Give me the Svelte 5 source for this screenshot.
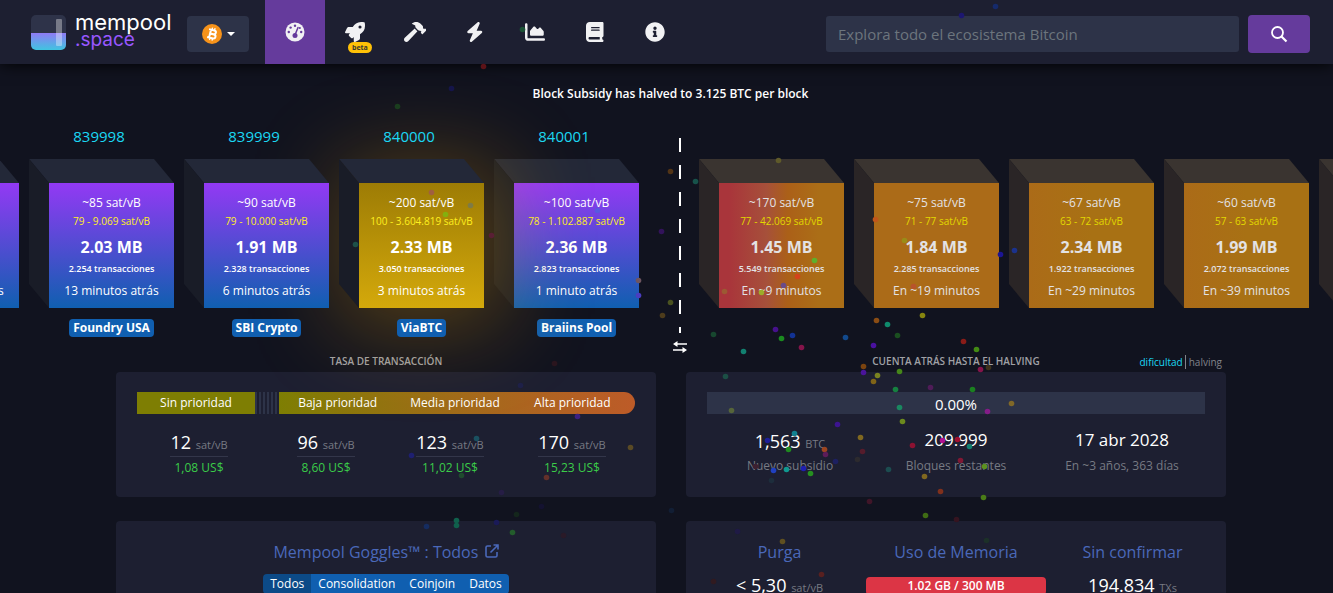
<script>
  const navItems = [
    { id: "dashboard", label: "Panel" },
    { id: "rocket", label: "Acelerador", beta: true },
    { id: "hammer", label: "Minería" },
    { id: "bolt", label: "Lightning" },
    { id: "chart", label: "Gráficos" },
    { id: "book", label: "Documentos" },
    { id: "info", label: "Acerca de" },
  ];

  const icons = {
    rocket: {
      box: "0 0 512 512",
      d: "M505.1 19.1c-1.2-5.5-6.7-11-12.2-12.2C460.7 0 435.5 0 410.4 0 307.2 0 245.3 55.2 199.1 128H94.8c-16.3 0-35.5 11.9-42.9 26.5L2.5 253.3A28.4 28.4 0 0 0 0 264a24 24 0 0 0 24 24h103.8l-22.5 22.5c-11.3 11.3-13 32.2 0 45.2l50.9 50.9c11.2 11.2 32.2 13.2 45.3 0l22.5-22.4V488a24 24 0 0 0 24 24 28.6 28.6 0 0 0 10.7-2.5l98.7-49.4c14.7-7.3 26.6-26.5 26.6-42.9V312.8c72.6-46.3 128-108.4 128-211.1 0-25.2 0-50.4-6.9-82.6ZM384 168a40 40 0 1 1 40-40 40 40 0 0 1-40 40Z",
    },
    hammer: {
      box: "0 0 576 512",
      d: "M571.31 193.94l-22.63-22.63c-6.25-6.25-16.38-6.25-22.63 0l-11.31 11.31-28.9-28.9c5.63-21.31.36-44.9-16.35-61.61l-45.25-45.25c-62.48-62.48-163.79-62.48-226.28 0l90.51 45.25v18.75c0 16.97 6.74 33.25 18.75 45.25l49.14 49.14c16.71 16.71 40.3 21.98 61.61 16.35l28.9 28.9-11.31 11.31c-6.25 6.25-6.25 16.38 0 22.63l22.63 22.63c6.25 6.25 16.38 6.25 22.63 0l90.51-90.51c6.23-6.24 6.23-16.37-.02-22.62zm-286.72-15.2c-3.7-3.7-6.84-7.79-9.85-11.95L19.64 404.96c-25.57 23.88-26.26 64.19-1.53 88.93s65.05 24.05 88.92-1.53l238.13-255.07c-3.96-2.91-7.9-5.87-11.44-9.41l-49.13-49.14z",
    },
    bolt: {
      box: "0 0 448 512",
      d: "M349.4 44.6c5.9-13.7 1.5-29.7-10.6-38.5s-28.6-8-39.9 1.8l-256 224c-10 8.8-13.6 22.9-8.9 35.3S50.7 288 64 288H175.5L98.6 467.4c-5.9 13.7-1.5 29.7 10.6 38.5s28.6 8 39.9-1.8l256-224c10-8.8 13.6-22.9 8.9-35.3s-16.6-20.7-30-20.7H272.5L349.4 44.6z",
    },
    chart: {
      box: "0 0 512 512",
      d: "M64 64c0-17.7-14.3-32-32-32S0 46.3 0 64V400c0 44.2 35.8 80 80 80H480c17.7 0 32-14.3 32-32s-14.3-32-32-32H80c-8.8 0-16-7.2-16-16V64zm96 288H448c17.7 0 32-14.3 32-32V251.8c0-7.6-2.7-15-7.7-20.8l-65.8-76.8c-12.1-14.2-33.7-15-46.9-1.8l-21 21c-10 10-26.4 9.2-35.4-1.6l-39.2-47c-12.6-15.1-35.7-15.4-48.7-.6L135.9 215c-5.1 5.8-7.9 13.3-7.9 21.1v84c0 17.7 14.3 32 32 32z",
    },
    book: {
      box: "0 0 448 512",
      d: "M96 0C43 0 0 43 0 96V416c0 53 43 96 96 96H384h32c17.7 0 32-14.3 32-32s-14.3-32-32-32V384c17.7 0 32-14.3 32-32V32c0-17.7-14.3-32-32-32H384 96zm0 384H352v64H96c-17.7 0-32-14.3-32-32s14.3-32 32-32zm32-240c0-8.8 7.2-16 16-16H336c8.8 0 16 7.2 16 16s-7.2 16-16 16H144c-8.8 0-16-7.2-16-16zm16 48H336c8.8 0 16 7.2 16 16s-7.2 16-16 16H144c-8.8 0-16-7.2-16-16s7.2-16 16-16z",
    },
    info: {
      box: "0 0 512 512",
      d: "M256 8C119.043 8 8 119.083 8 256c0 136.997 111.043 248 248 248s248-111.003 248-248C504 119.083 392.957 8 256 8zm0 110c23.196 0 42 18.804 42 42s-18.804 42-42 42-42-18.804-42-42 18.804-42 42-42zm56 254c0 6.627-5.373 12-12 12h-88c-6.627 0-12-5.373-12-12v-24c0-6.627 5.373-12 12-12h12v-64h-12c-6.627 0-12-5.373-12-12v-24c0-6.627 5.373-12 12-12h64c6.627 0 12 5.373 12 12v100h12c6.627 0 12 5.373 12 12v24z",
    },
  };

  // newest first, laid out right to left
  const mined = [
    { height: "840001", fee: "~100 sat/vB", range: "78 - 1.102.887 sat/vB", size: "2.36 MB", txs: "2.823", time: "1 minuto atrás", pool: "Braiins Pool" },
    { height: "840000", fee: "~200 sat/vB", range: "100 - 3.604.819 sat/vB", size: "2.33 MB", txs: "3.050", time: "3 minutos atrás", pool: "ViaBTC", golden: true },
    { height: "839999", fee: "~90 sat/vB", range: "79 - 10.000 sat/vB", size: "1.91 MB", txs: "2.328", time: "6 minutos atrás", pool: "SBI Crypto" },
    { height: "839998", fee: "~85 sat/vB", range: "79 - 9.069 sat/vB", size: "2.03 MB", txs: "2.254", time: "13 minutos atrás", pool: "Foundry USA" },
    { height: "839997", fee: "~80 sat/vB", range: "75 - 900 sat/vB", size: "1.98 MB", txs: "2.410", time: "15 minutos atrás", pool: "AntPool" },
  ];

  const pending = [
    { fee: "~170 sat/vB", range: "77 - 42.069 sat/vB", size: "1.45 MB", txs: "5.549", time: "En ~9 minutos", kind: "hot" },
    { fee: "~75 sat/vB", range: "71 - 77 sat/vB", size: "1.84 MB", txs: "2.285", time: "En ~19 minutos", kind: "warm" },
    { fee: "~67 sat/vB", range: "63 - 72 sat/vB", size: "2.34 MB", txs: "1.922", time: "En ~29 minutos", kind: "mild" },
    { fee: "~60 sat/vB", range: "57 - 63 sat/vB", size: "1.99 MB", txs: "2.072", time: "En ~39 minutos", kind: "mild" },
    { fee: "~55 sat/vB", range: "52 - 57 sat/vB", size: "1.90 MB", txs: "2.150", time: "En ~49 minutos", kind: "mild" },
  ];

  const fees = [
    { rate: "12", usd: "1,08 US$" },
    { rate: "96", usd: "8,60 US$" },
    { rate: "123", usd: "11,02 US$" },
    { rate: "170", usd: "15,23 US$" },
  ];

  const filters = ["Todos", "Consolidation", "Coinjoin", "Datos"];
  let filter = $state("Todos");
  let search = $state("");

  // confetti: x, y, colour
  const confetti = [
    [522, 29, "#1c5236"], [483, 66, "#5c1318"], [961, 15, "#1d1770"], [995, 6, "#152a6b"],
    [397, 106, "#1a3d1e"], [451, 88, "#15154a"], [431, 192, "#a0603f"], [470, 205, "#7f7b45"],
    [445, 214, "#84b00e"], [355, 244, "#1d5048"], [491, 235, "#591f34"], [597, 210, "#5858e0"],
    [638, 280, "#6e5560"], [638, 295, "#4a3dc0"], [670, 171, "#523416"], [695, 181, "#17524a"],
    [661, 231, "#32135a"], [670, 302, "#4a5220"], [662, 315, "#4d3c1c"], [778, 160, "#5f5a2a"],
    [814, 260, "#5fb02b"], [797, 276, "#d4431c"], [783, 285, "#6a4b88"], [761, 292, "#9cac2a"],
    [724, 291, "#9c5a33"], [713, 334, "#17472f"], [743, 351, "#128070"], [775, 329, "#46118c"],
    [781, 338, "#1b8a20"], [792, 335, "#123294"], [801, 347, "#84144a"], [845, 337, "#12498c"],
    [873, 345, "#4a11a0"], [876, 320, "#8a4c14"], [887, 324, "#0f8a6c"], [897, 335, "#1b4f20"],
    [922, 315, "#86850f"], [963, 341, "#8a1c18"], [976, 349, "#438a14"], [875, 219, "#c0561a"],
    [904, 240, "#9a8c18"], [1000, 254, "#1b1494"], [1014, 250, "#1b328c"], [913, 286, "#b8542b"],
    [554, 363, "#2a151e"], [520, 385, "#1e2048"], [577, 416, "#3d2080"], [476, 438, "#1a5060"],
    [411, 455, "#1e1f70"], [461, 475, "#1f4a2e"], [546, 477, "#63302a"], [501, 492, "#261d45"],
    [630, 447, "#5a4a25"], [863, 366, "#7a430f"], [863, 372, "#4a149a"], [877, 375, "#7a8220"],
    [873, 381, "#806418"], [899, 371, "#45861a"], [895, 389, "#168040"], [930, 387, "#4f1c58"],
    [725, 376, "#1c4f45"], [731, 410, "#56653a"], [899, 407, "#1a8860"], [902, 421, "#6c8a1e"],
    [837, 424, "#3c1490"], [860, 437, "#806820"], [912, 445, "#8c1232"], [862, 451, "#551c2c"],
    [857, 459, "#2c2a2e"], [794, 433, "#128090"], [767, 440, "#202098"], [788, 449, "#1f8a20"],
    [824, 449, "#9c4420"], [825, 454, "#5c1c58"], [835, 461, "#1d2060"], [773, 470, "#2040c0"],
    [786, 469, "#109890"], [803, 468, "#2020b0"], [810, 473, "#269020"], [755, 466, "#3c2030"],
    [771, 480, "#1d2d3c"], [888, 469, "#1c4c50"], [924, 476, "#806820"], [940, 491, "#80301c"],
    [869, 501, "#401528"], [980, 369, "#84144a"], [988, 367, "#3e321c"], [972, 389, "#1b8020"],
    [987, 411, "#841c88"], [1011, 403, "#806828"], [942, 440, "#b01090"], [957, 439, "#a01030"],
    [969, 446, "#128070"], [960, 460, "#801834"], [984, 466, "#5c9020"], [983, 497, "#4a7c18"],
    [426, 526, "#152c60"], [456, 520, "#10604c"], [456, 525, "#10604c"], [496, 522, "#1a1a58"],
    [512, 532, "#235c2c"], [516, 514, "#14261c"], [563, 535, "#2a1a28"], [925, 515, "#3f6c14"],
    [956, 519, "#351420"], [782, 541, "#605020"], [821, 574, "#582020"], [986, 540, "#1c3028"],
    [737, 531, "#1f1a45"], [671, 510, "#121e34"], [541, 506, "#141230"], [713, 581, "#301a20"],
  ];
</script>

{#snippet cube(block, kind)}
  <div class="cube {kind}">
    <div class="face">
      <div class="fee">{block.fee}</div>
      <div class="range">{block.range}</div>
      <div class="size">{block.size}</div>
      <div class="txs">{block.txs} transacciones</div>
      <div class="time">{block.time}</div>
    </div>
  </div>
{/snippet}

<div class="page">
  <header>
    <a class="logo" href="/">
      <svg class="mark" viewBox="0 0 35 35" aria-hidden="true">
        <defs>
          <linearGradient id="mark-fill" x1="0" y1="0" x2="0" y2="1">
            <stop offset="0" stop-color="#8f7bf5" />
            <stop offset="1" stop-color="#3fc5e0" />
          </linearGradient>
        </defs>
        <path d="M5 0h25a5 5 0 0 1 5 5v13H0V5a5 5 0 0 1 5-5z" fill="#2e3349" />
        <path d="M0 18h35v12a5 5 0 0 1-5 5H5a5 5 0 0 1-5-5z" fill="url(#mark-fill)" />
        <rect x="25" y="4" width="6" height="27" rx="1" fill="#fff" opacity="0.35" />
      </svg>
      <span class="wordmark">
        <span>mempool</span>
        <span class="space">.space</span>
      </span>
    </a>

    <button class="network" aria-label="Red">
      <svg class="btc" viewBox="0 0 20 20" aria-hidden="true">
        <circle cx="10" cy="10" r="10" fill="#f7931a" />
        <g transform="rotate(14 10 10)" fill="none" stroke="#fff" stroke-width="2">
          <path d="M6 6h5.500a1.900 1.900 0 0 1 0 3.900H8M8 10h4a2 2 0 0 1 0 4.100H6M8 6v8" />
          <path d="M9 3.600v2.400M11.600 3.600v2.400M9 14v2.400M11.600 14v2.400" stroke-width="1.300" />
        </g>
      </svg>
      <span class="caret"></span>
    </button>

    <nav>
      {#each navItems as item}
        <a href="/{item.id}" class:active={item.id === "dashboard"} aria-label={item.label}>
          {#if item.id === "dashboard"}
            <svg viewBox="0 0 20 20" aria-hidden="true">
              <circle cx="10" cy="10" r="9.500" />
              <g fill="#653b9c">
                <circle cx="10" cy="3.800" r="1.200" />
                <circle cx="5.600" cy="5.600" r="1.200" />
                <circle cx="3.800" cy="10" r="1.200" />
                <circle cx="16.200" cy="10" r="1.200" />
                <circle cx="14.800" cy="6" r="1.100" />
                <circle cx="10" cy="13.400" r="2.500" />
              </g>
              <path d="M10 13l3-7.500" stroke="#653b9c" stroke-width="1.500" stroke-linecap="round" />
            </svg>
          {:else}
            <svg viewBox={icons[item.id].box} aria-hidden="true">
              <path d={icons[item.id].d} />
            </svg>
          {/if}
          {#if item.beta}<span class="beta">beta</span>{/if}
        </a>
      {/each}
    </nav>

    <form class="search" onsubmit={(e) => e.preventDefault()}>
      <input
        type="text"
        bind:value={search}
        aria-label="Buscar"
        placeholder="Explora todo el ecosistema Bitcoin"
      />
      <button aria-label="Buscar">
        <svg viewBox="0 0 18 18" aria-hidden="true">
          <circle cx="7.500" cy="7.500" r="5.500" fill="none" stroke="#fff" stroke-width="1.800" />
          <path d="M11.500 11.500l5 5" stroke="#fff" stroke-width="2.200" />
        </svg>
      </button>
    </form>
  </header>

  <h1>Block Subsidy has halved to 3.125 BTC per block</h1>

  <section class="chain">
    <div class="side mined">
      {#each mined as block}
        <div class="block">
          <a class="height" href="/block/{block.height}">{block.height}</a>
          {@render cube(block, block.golden ? "golden" : "done")}
          <a class="pool" href="/pool/{block.pool}">{block.pool}</a>
        </div>
      {/each}
    </div>
    <div class="divider">
      <div class="dashes"></div>
      <svg viewBox="0 0 14 14" aria-hidden="true">
        <path d="M2 4h12M0 10h12" stroke="#fff" stroke-width="1.700" />
        <path d="M4.500 1v6L0 4zM9.500 7v6L14 10z" fill="#fff" />
      </svg>
    </div>
    <div class="side pending">
      {#each pending as block}
        <div class="block">{@render cube(block, block.kind)}</div>
      {/each}
    </div>
  </section>

  <main>
    <section>
      <div class="title"><h2>Tasa de transacción</h2></div>
      <div class="card">
        <div class="priorities">
          <div class="none">Sin prioridad</div>
          <div class="stripes"></div>
          <div class="levels">
            <span>Baja prioridad</span>
            <span>Media prioridad</span>
            <span>Alta prioridad</span>
          </div>
        </div>
        <div class="fees">
          {#each fees as fee}
            <div class="estimate">
              <div class="value">{fee.rate} <small>sat/vB</small></div>
              <div class="usd">{fee.usd}</div>
            </div>
          {/each}
        </div>
      </div>
    </section>

    <section>
      <div class="title">
        <h2>Cuenta atrás hasta el halving</h2>
        <div class="toggle"><a href="/difficulty">dificultad</a><i></i><span>halving</span></div>
      </div>
      <div class="card">
        <div class="progress">0.00%</div>
        <div class="stats">
          <div>
            <div class="value lined">1,563 <small>BTC</small></div>
            <div class="label">Nuevo subsidio</div>
          </div>
          <div>
            <div class="value plain">209.999</div>
            <div class="label">Bloques restantes</div>
          </div>
          <div>
            <div class="value plain">17 abr 2028</div>
            <div class="label">En ~3 años, 363 días</div>
          </div>
        </div>
      </div>
    </section>

    <section class="card goggles">
      <a class="heading" href="/mempool">
        Mempool Goggles™ : Todos
        <svg viewBox="0 0 14 14" aria-hidden="true">
          <path
            d="M6 2H2.500Q1 2 1 3.500v8Q1 13 2.500 13h8q1.500 0 1.500-1.500V8M8.500 1H13v4.500M13 1L5.500 8.500"
            fill="none"
            stroke="currentColor"
            stroke-width="1.600"
          />
        </svg>
      </a>
      <div class="filters">
        {#each filters as name}
          <button class:active={filter === name} onclick={() => (filter = name)}>{name}</button>
        {/each}
      </div>
    </section>

    <section class="card memory">
      <div>
        <h3>Purga</h3>
        <div class="value">&lt; 5,30 <small>sat/vB</small></div>
      </div>
      <div>
        <h3>Uso de Memoria</h3>
        <div class="usage">1.02 GB / 300 MB</div>
      </div>
      <div>
        <h3>Sin confirmar</h3>
        <div class="value">194.834 <small>TXs</small></div>
      </div>
    </section>
  </main>

  <svg class="confetti" aria-hidden="true">
    {#each confetti as [x, y, colour]}
      <circle cx={x + 0.5} cy={y + 0.5} r="2.800" fill={colour} />
    {/each}
  </svg>
</div>

<style>
  :global(body) {
    background: #11131f;
  }

  .page {
    position: relative;
    height: 100vh;
    overflow: hidden;
    color: #fff;
    font-family: "Open Sans", "Noto Sans", sans-serif;
    font-size: 15px;
  }

  .page * {
    box-sizing: border-box;
  }

  a {
    color: inherit;
    text-decoration: none;
  }

  button,
  input {
    border: 0;
    font-family: inherit;
    color: inherit;
  }

  button {
    cursor: pointer;
  }

  h1,
  h2,
  h3 {
    margin: 0;
  }

  header {
    display: flex;
    align-items: center;
    height: 64px;
    padding: 0 23px 0 31px;
    background: #1d1f31;
    box-shadow: 0 0 15px #000;
  }

  .logo {
    display: flex;
    align-items: center;
    gap: 9px;
    width: 156px;
  }

  .mark {
    width: 35px;
    height: 35px;
  }

  .wordmark {
    display: flex;
    flex-direction: column;
    padding-bottom: 3px;
    font-family: Inter, sans-serif;
    font-size: 22px;
    line-height: 17px;
  }

  .space {
    color: #9857ff;
    font-size: 19px;
  }

  .network {
    display: flex;
    align-items: center;
    justify-content: center;
    gap: 5px;
    width: 62px;
    height: 36px;
    margin: 4px 16px 0 0;
    border-radius: 4px;
    background: #2d3348;
  }

  .btc {
    width: 20px;
    height: 20px;
  }

  .caret {
    border: 4px solid transparent;
    border-top-color: #fff;
    border-bottom: 0;
  }

  nav {
    display: flex;
    align-self: stretch;
  }

  nav a {
    position: relative;
    display: flex;
    align-items: center;
    justify-content: center;
    width: 60px;
  }

  nav a.active {
    background: #653b9c;
  }

  nav svg {
    height: 20px;
    fill: #f1f1f3;
  }

  .beta {
    position: absolute;
    top: 42px;
    left: 23px;
    padding: 0 4px;
    border-radius: 6px;
    background: #ffc107;
    color: #3c3a30;
    font-size: 7px;
    font-weight: 700;
    line-height: 11px;
  }

  .search {
    display: flex;
    align-items: center;
    gap: 9px;
    width: 484px;
    margin: 4px 0 0 auto;
  }

  .search input {
    flex: 1;
    min-width: 0;
    height: 36px;
    padding: 0 12px;
    border-radius: 3px;
    background: #2d3348;
    font-size: 15px;
  }

  .search input::placeholder {
    color: #6c757d;
    opacity: 1;
  }

  .search button {
    display: flex;
    align-items: center;
    justify-content: center;
    width: 62px;
    height: 38px;
    border-radius: 4px;
    background: #653b9c;
  }

  .search button svg {
    width: 18px;
    height: 18px;
  }

  h1 {
    padding: 20px 0 0 8px;
    font-size: 12px;
    font-weight: 600;
    line-height: 20px;
    text-align: center;
  }

  .chain {
    display: grid;
    grid-template-columns: minmax(0, 1fr) 14px minmax(0, 1fr);
    padding: 22px 0 0 27px;
    overflow-x: clip;
  }

  .side {
    display: flex;
    gap: 10px;
  }

  .mined {
    flex-direction: row-reverse;
    padding-right: 34px;
  }

  .pending {
    padding: 33px 0 0 12px;
  }

  /* older blocks paint over the glow of the golden one */
  .block {
    display: flex;
    flex: none;
    flex-direction: column;
    width: 145px;
    isolation: isolate;
  }

  .height {
    z-index: 1;
    height: 33px;
    padding-right: 5px;
    color: #1bd8f4;
    line-height: 20px;
    text-align: center;
  }

  /* the top and left sides are drawn in the first row and column */
  .cube {
    display: grid;
    grid-template: 24px 125px / 20px 125px;
    isolation: isolate;
  }

  .cube::before,
  .cube::after {
    content: "";
    z-index: 1;
  }

  .cube::before {
    grid-area: 1 / 1 / 2 / 3;
    clip-path: polygon(0 0, 125px 0, 100% 100%, 20px 100%);
    background: #232838;
  }

  .cube::after {
    grid-area: 1 / 1 / 3 / 2;
    clip-path: polygon(0 0, 100% 24px, 100% 100%, 0 125px);
    background: #191c27;
  }

  .pending .cube::before {
    background: #3a3430;
  }

  .pending .cube::after {
    background: #2a2526;
  }

  .face {
    grid-area: 2 / 2;
    padding-top: 11px;
    background: linear-gradient(#9339f4, #105fb0);
    text-align: center;
    white-space: nowrap;
  }

  .golden .face {
    background: linear-gradient(#9d7c05, #d4a90b);
    box-shadow: 0 0 90px 20px rgba(251, 173, 1, 0.3);
  }

  .pending .face {
    color: #e3e2e4;
  }

  .hot .face {
    background: linear-gradient(to right, #a9353b 8%, #a6503a 38%, #ab6018 55%, #ab6e17 80%);
  }

  .warm .face {
    background: #ab6b18;
  }

  .mild .face {
    background: linear-gradient(to right, #ab6b18, #a87114 50%);
  }

  .fee {
    font-size: 12px;
    line-height: 18px;
  }

  .range {
    color: #ffef1f;
    font-size: 10px;
    font-weight: 500;
    line-height: 19px;
  }

  .pending .range {
    color: #e2d800;
  }

  .size {
    padding-top: 4px;
    font-size: 16px;
    font-weight: 700;
    line-height: 24px;
  }

  .txs {
    font-size: 9px;
    font-weight: 600;
    line-height: 20px;
  }

  .time {
    font-size: 12px;
    line-height: 24px;
  }

  .pool {
    z-index: 1;
    align-self: center;
    margin: 11px 0 0 20px;
    padding: 0 4px;
    border-radius: 4px;
    background: #105fb0;
    font-size: 12px;
    font-weight: 700;
    line-height: 18px;
    white-space: nowrap;
  }

  .divider {
    display: flex;
    flex-direction: column;
    align-items: center;
    gap: 7px;
    padding-top: 12px;
  }

  .dashes {
    width: 2px;
    height: 195px;
    background: repeating-linear-gradient(#fff 0 14px, transparent 14px 27px);
  }

  .divider svg {
    flex: none;
    width: 14px;
    height: 14px;
  }

  main {
    display: grid;
    grid-template-columns: 1fr 1fr;
    gap: 24px 30px;
    max-width: 1119px;
    margin: 0 auto;
    padding: 0 0 0 9px;
  }

  .title {
    display: grid;
    grid-template-columns: 1fr auto 1fr;
    height: 18px;
  }

  .title h2 {
    grid-column: 2;
    color: #a0a1a6;
    font-size: 10px;
    font-weight: 600;
    line-height: 14px;
    text-transform: uppercase;
  }

  .toggle {
    padding-right: 4px;
    color: #82848b;
    font-size: 10px;
    line-height: 17px;
    text-align: right;
  }

  .toggle a {
    color: #1bd8f4;
  }

  .toggle i {
    margin: 0 3px 0 2px;
    border-left: 1px solid #82848b;
  }

  .card {
    padding: 20px 21px;
    border-radius: 4px;
    background: #1d1f31;
  }

  .priorities {
    display: grid;
    grid-template-columns: 118fr 24px 356fr;
    font-size: 12px;
    line-height: 22px;
    text-align: center;
  }

  .none {
    background: #7e7e03;
  }

  .stripes {
    background: repeating-linear-gradient(to right, #2d3348 0 2px, #1d1f31 2px 4px);
  }

  .levels {
    display: grid;
    grid-template-columns: repeat(3, 1fr);
    padding-right: 4px;
    border-radius: 0 11px 11px 0;
    background: linear-gradient(to right, #7e7e03, #a4691c 55%, #bd5b28);
  }

  .fees {
    display: grid;
    grid-template-columns: 124fr 130fr 118fr 126fr;
    justify-items: center;
    height: 63px;
    padding-top: 14px;
  }

  .value {
    font-size: 18px;
    line-height: 28px;
    white-space: nowrap;
  }

  .value small {
    color: #777a83;
    font-size: 11px;
    line-height: 1;
  }

  .estimate .value {
    border-bottom: 1px solid #33364a;
  }

  .usd {
    color: #3bcc49;
    font-size: 12px;
    line-height: 22px;
    text-align: center;
  }

  .progress {
    height: 22px;
    background: #2d3348;
    line-height: 24px;
    text-align: center;
  }

  .stats {
    display: grid;
    grid-template-columns: repeat(3, 1fr);
    height: 63px;
    padding-top: 12px;
    text-align: center;
  }

  .stats .lined {
    padding-top: 2px;
    line-height: 26px;
  }

  .stats .plain {
    font-size: 17px;
  }

  .label {
    padding-top: 2px;
    color: #777a83;
    font-size: 12px;
    line-height: 20px;
  }

  .heading,
  h3 {
    color: #4a68b9;
    font-size: 16px;
    font-weight: 400;
    line-height: 22px;
  }

  .heading svg {
    width: 14px;
    height: 14px;
    margin-left: 2px;
  }

  .goggles {
    display: flex;
    flex-direction: column;
    align-items: center;
    gap: 11px;
    min-height: 400px;
  }

  .filters {
    display: flex;
    overflow: hidden;
    border-radius: 4px;
  }

  .filters button {
    padding: 0 7px;
    background: #105fb0;
    font-size: 12px;
    line-height: 20px;
  }

  .filters .active {
    background: #0c4a87;
  }

  .memory {
    display: grid;
    grid-template-columns: repeat(3, 1fr);
    padding: 20px 7px;
    text-align: center;
  }

  .memory > div {
    display: flex;
    flex-direction: column;
    gap: 8px;
  }

  .usage {
    align-self: center;
    width: 180px;
    margin-top: 6px;
    border-radius: 4px;
    background: #dc3545;
    font-size: 12px;
    font-weight: 600;
    line-height: 18px;
  }

  .confetti {
    position: absolute;
    inset: 0;
    width: 100%;
    height: 100%;
    pointer-events: none;
  }
</style>
